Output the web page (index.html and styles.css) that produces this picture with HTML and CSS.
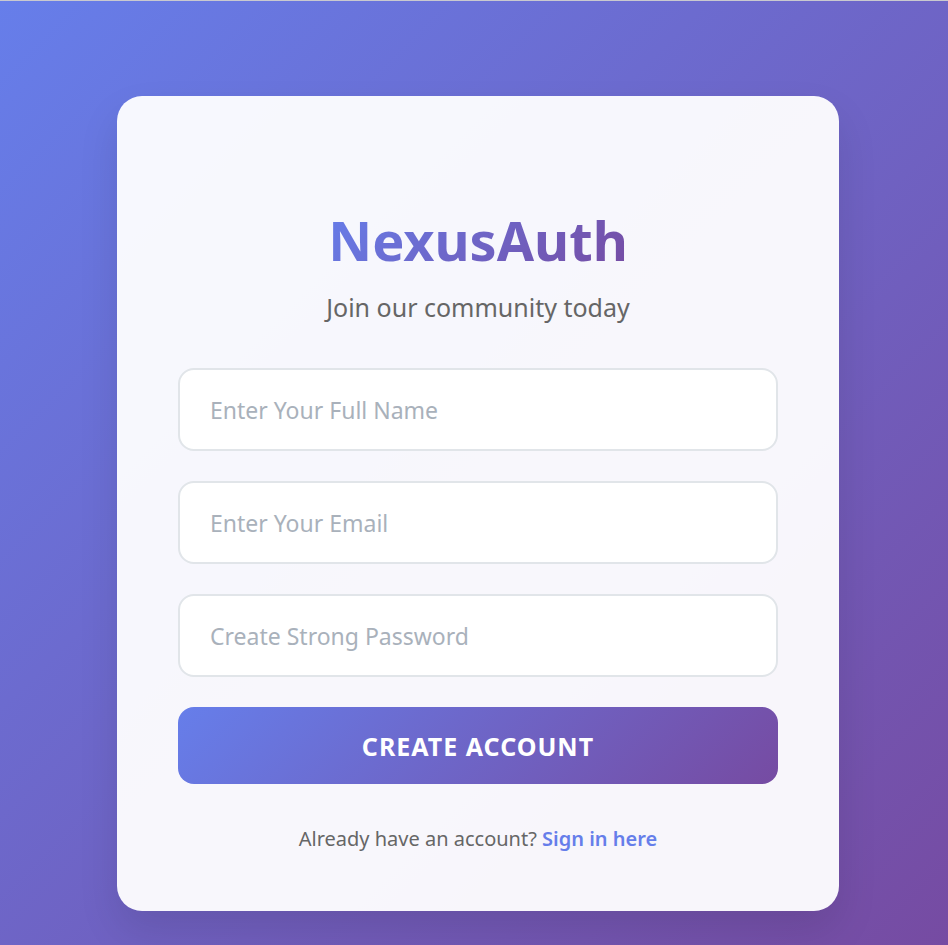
FILE: index.html
```html
<!DOCTYPE html>
<html lang="en">
<head>
<meta charset="utf-8">
<title>NexusAuth - Sign Up</title>
<link rel="stylesheet" href="styles.css">
</head>
<body>
<div class="page">
  <div class="card">
    <h1 class="brand">NexusAuth</h1>
    <p class="tagline">Join our community today</p>
    <form class="form">
      <input class="field" type="text" placeholder="Enter Your Full Name">
      <input class="field" type="email" placeholder="Enter Your Email">
      <input class="field" type="password" placeholder="Create Strong Password">
      <button class="submit" type="button">CREATE ACCOUNT</button>
    </form>
    <p class="footer">Already have an account? <a class="link" href="#">Sign in here</a></p>
  </div>
</div>
</body>
</html>
```

FILE: styles.css
```css
* { box-sizing: border-box; }
html, body { margin: 0; padding: 0; }
body {
  min-height: 945px;
  font-family: "Noto Sans", "Open Sans", sans-serif;
  background: linear-gradient(135deg, #667eea 0%, #764ba2 100%);
  border-top: 1px solid #c9c9cf;
}
.page {
  display: flex;
  justify-content: center;
  padding: 95px 0 0 8px;
}
.card {
  width: 722px;
  height: 815px;
  background: rgba(255, 255, 255, 0.95);
  border-radius: 25px;
  padding: 109px 61px 0;
  box-shadow: 0 20px 40px rgba(0, 0, 0, 0.1);
  text-align: center;
}
.brand {
  margin: 0;
  font-size: 54px;
  line-height: 70px;
  font-weight: 700;
  background: linear-gradient(135deg, #667eea 0%, #764ba2 100%);
  -webkit-background-clip: text;
  background-clip: text;
  color: transparent;
  display: inline-block;
}
.tagline {
  margin: 16px 0 0;
  font-size: 25px;
  line-height: 32px;
  color: #666;
}
.form {
  margin-top: 45px;
  display: flex;
  flex-direction: column;
  gap: 30px;
}
.field {
  display: block;
  width: 100%;
  height: 83px;
  border: 2px solid #e1e5e9;
  border-radius: 16px;
  background: #fff;
  padding: 0 30px;
  font-family: inherit;
  font-size: 23px;
  color: #333;
  outline: none;
}
.field::placeholder { color: #a9b1bb; }
.submit {
  height: 77px;
  border: none;
  border-radius: 16px;
  background: linear-gradient(135deg, #667eea 0%, #764ba2 100%);
  color: #fff;
  font-family: inherit;
  font-size: 25px;
  font-weight: 700;
  letter-spacing: 1px;
  cursor: pointer;
}
.footer {
  margin: 41px 0 0;
  font-size: 20px;
  line-height: 28px;
  color: #666;
}
.link {
  color: #667eea;
  font-weight: 600;
  text-decoration: none;
}
```
